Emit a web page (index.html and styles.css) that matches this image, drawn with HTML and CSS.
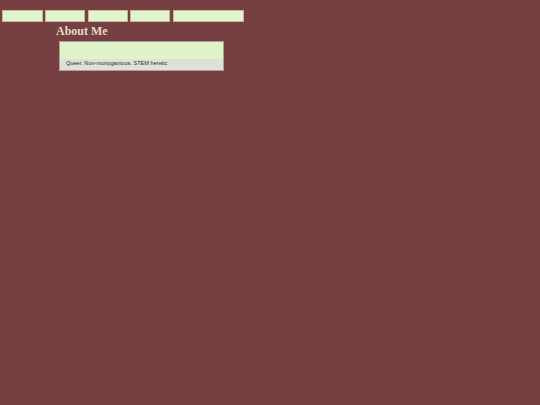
FILE: index.html
```html
<!DOCTYPE html>
<html>
<head>
<meta charset="utf-8">
<link rel="stylesheet" href="styles.css">
</head>
<body>
<nav class="nav">
  <a class="tab w41" href="#"></a>
  <a class="tab w40" href="#"></a>
  <a class="tab w40 ml3" href="#"></a>
  <a class="tab w40" href="#"></a>
  <a class="tab w71 ml3" href="#"></a>
</nav>
<main class="main">
  <h2 class="title">About Me</h2>
  <div class="card">
    <div class="card-body"></div>
    <div class="card-foot">Queer. Non-monogamous. STEM heretic</div>
  </div>
</main>
</body>
</html>
```
FILE: styles.css
```css
html, body {
  margin: 0;
  padding: 0;
  background: #763f42;
  height: 100%;
}
.nav {
  display: flex;
  gap: 2px;
  padding: 10px 0 0 2px;
}
.tab {
  display: block;
  height: 10px;
  background: #e0f5cc;
  border: 1px solid #c8b596;
}
.w41 { width: 39px; }
.w40 { width: 38px; }
.w71 { width: 69px; }
.ml3 { margin-left: 1px; }
.main {
  padding-left: 56px;
}
.title {
  margin: 0;
  padding-top: 2px;
  font-family: "Liberation Serif", serif;
  font-weight: bold;
  font-size: 12px;
  line-height: 15px;
  color: #e6d8c2;
}
.card {
  margin: 2px 0 0 3px;
  width: 163px;
  border: 1px solid #a8a29a;
  background: #e0e0d8;
}
.card-body {
  height: 17px;
  background: #dff5c9;
}
.card-foot {
  height: 11px;
  padding-left: 6px;
  font-family: "Liberation Sans", Arial, sans-serif;
  font-size: 5.6px;
  line-height: 9px;
  color: #2a2a2a;
}
```
